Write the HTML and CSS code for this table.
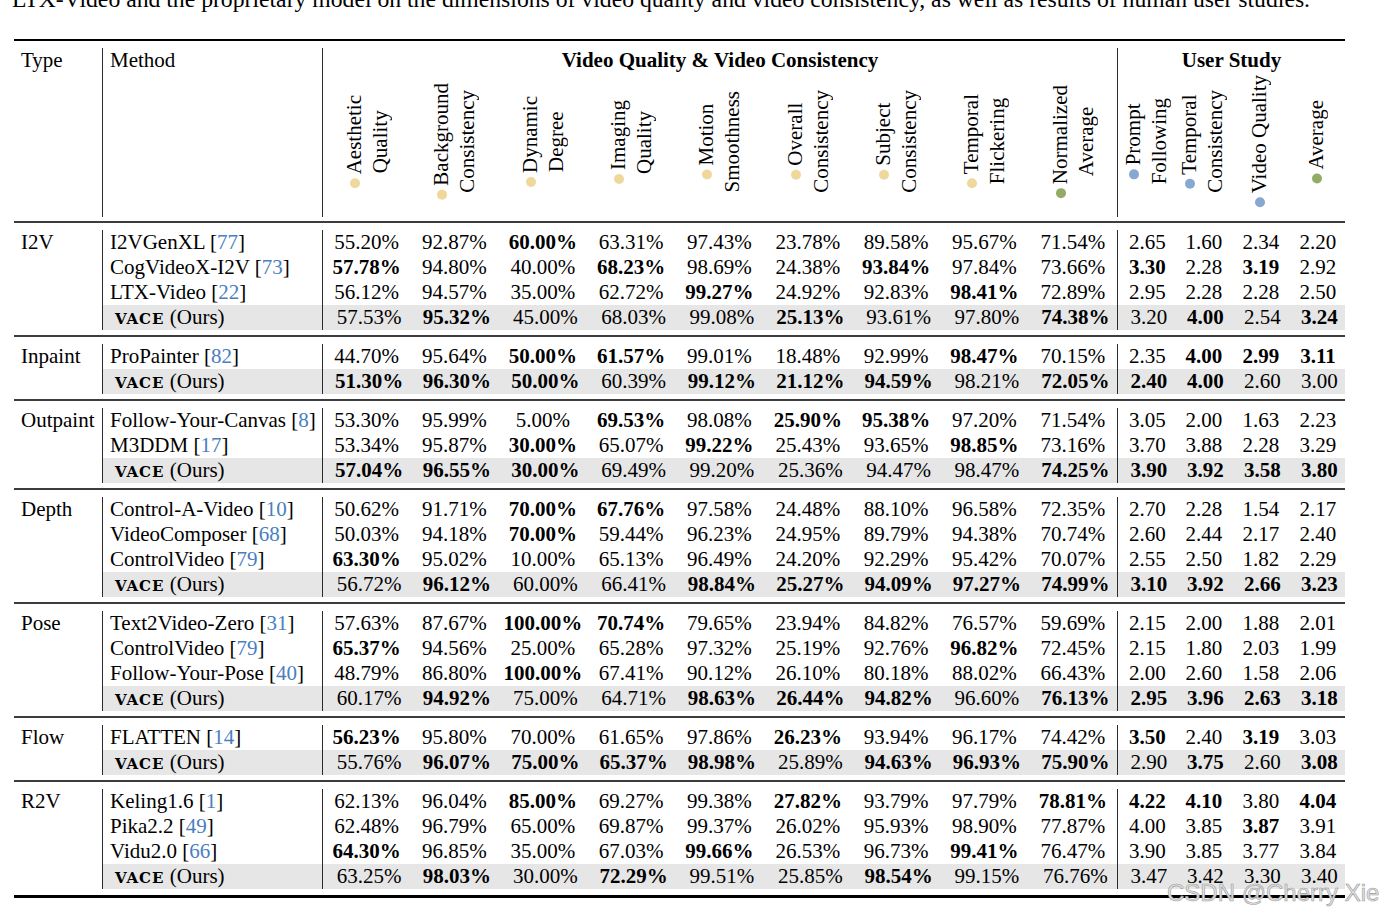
FILE: index.html
```html
<!DOCTYPE html>
<html lang="en">
<head>
<meta charset="utf-8">
<title>VACE comparison table</title>
<link rel="stylesheet" href="styles.css">
</head>
<body>
<div class="caption">LTX-Video and the proprietary model on the dimensions of video quality and video consistency, as well as results of human user studies.</div>
<table class="results">
<colgroup>
<col class="c-type"><col class="c-method">
<col class="c-pct"><col class="c-pct"><col class="c-pct"><col class="c-pct"><col class="c-pct"><col class="c-pct"><col class="c-pct"><col class="c-pct"><col class="c-pct">
<col class="c-us"><col class="c-us"><col class="c-us"><col class="c-us">
</colgroup>
<thead>
<tr class="sep sep-top"><td colspan="15"><div class="rule"></div></td></tr>
<tr class="hd-title">
<th class="h-type" rowspan="2">Type</th>
<th class="h-method vl" rowspan="2">Method</th>
<th class="h-grp vl" colspan="9">Video Quality &amp; Video Consistency</th>
<th class="h-grp vl" colspan="4">User Study</th>
</tr>
<tr class="hd-labels">
<th class="vl"><div class="lbl"><span class="rot"><i class="dot y"></i>Aesthetic<br>Quality</span></div></th>
<th><div class="lbl"><span class="rot"><i class="dot y"></i>Background<br>Consistency</span></div></th>
<th><div class="lbl"><span class="rot"><i class="dot y"></i>Dynamic<br>Degree</span></div></th>
<th><div class="lbl"><span class="rot"><i class="dot y"></i>Imaging<br>Quality</span></div></th>
<th><div class="lbl"><span class="rot"><i class="dot y"></i>Motion<br>Smoothness</span></div></th>
<th><div class="lbl"><span class="rot"><i class="dot y"></i>Overall<br>Consistency</span></div></th>
<th><div class="lbl"><span class="rot"><i class="dot y"></i>Subject<br>Consistency</span></div></th>
<th><div class="lbl"><span class="rot"><i class="dot y"></i>Temporal<br>Flickering</span></div></th>
<th><div class="lbl"><span class="rot"><i class="dot g"></i>Normalized<br>Average</span></div></th>
<th class="vl"><div class="lbl"><span class="rot"><i class="dot b"></i>Prompt<br>Following</span></div></th>
<th><div class="lbl"><span class="rot"><i class="dot b"></i>Temporal<br>Consistency</span></div></th>
<th><div class="lbl"><span class="rot"><i class="dot b"></i>Video Quality</span></div></th>
<th><div class="lbl"><span class="rot"><i class="dot g"></i>Average</span></div></th>
</tr>
<tr class="sep sep-head"><td colspan="15"><div class="rule"></div></td></tr>
</thead>
<tbody>
<!-- I2V -->
<tr class="row"><td class="type" rowspan="4">I2V</td><td class="m vl">I2VGenXL [<span class="ref">77</span>]</td>
<td class="n vl">55.20%</td><td class="n">92.87%</td><td class="n"><b>60.00%</b></td><td class="n">63.31%</td><td class="n">97.43%</td><td class="n">23.78%</td><td class="n">89.58%</td><td class="n">95.67%</td><td class="n">71.54%</td>
<td class="u vl">2.65</td><td class="u">1.60</td><td class="u">2.34</td><td class="u">2.20</td></tr>
<tr class="row"><td class="m vl">CogVideoX-I2V [<span class="ref">73</span>]</td>
<td class="n vl"><b>57.78%</b></td><td class="n">94.80%</td><td class="n">40.00%</td><td class="n"><b>68.23%</b></td><td class="n">98.69%</td><td class="n">24.38%</td><td class="n"><b>93.84%</b></td><td class="n">97.84%</td><td class="n">73.66%</td>
<td class="u vl"><b>3.30</b></td><td class="u">2.28</td><td class="u"><b>3.19</b></td><td class="u">2.92</td></tr>
<tr class="row"><td class="m vl">LTX-Video [<span class="ref">22</span>]</td>
<td class="n vl">56.12%</td><td class="n">94.57%</td><td class="n">35.00%</td><td class="n">62.72%</td><td class="n"><b>99.27%</b></td><td class="n">24.92%</td><td class="n">92.83%</td><td class="n"><b>98.41%</b></td><td class="n">72.89%</td>
<td class="u vl">2.95</td><td class="u">2.28</td><td class="u">2.28</td><td class="u">2.50</td></tr>
<tr class="row ours"><td class="m vl"><span class="vace">VACE</span> (Ours)</td>
<td class="n vl">57.53%</td><td class="n"><b>95.32%</b></td><td class="n">45.00%</td><td class="n">68.03%</td><td class="n">99.08%</td><td class="n"><b>25.13%</b></td><td class="n">93.61%</td><td class="n">97.80%</td><td class="n"><b>74.38%</b></td>
<td class="u vl">3.20</td><td class="u"><b>4.00</b></td><td class="u">2.54</td><td class="u"><b>3.24</b></td></tr>
<tr class="sep"><td colspan="15"><div class="rule"></div></td></tr>
<!-- Inpaint -->
<tr class="row"><td class="type" rowspan="2">Inpaint</td><td class="m vl">ProPainter [<span class="ref">82</span>]</td>
<td class="n vl">44.70%</td><td class="n">95.64%</td><td class="n"><b>50.00%</b></td><td class="n"><b>61.57%</b></td><td class="n">99.01%</td><td class="n">18.48%</td><td class="n">92.99%</td><td class="n"><b>98.47%</b></td><td class="n">70.15%</td>
<td class="u vl">2.35</td><td class="u"><b>4.00</b></td><td class="u"><b>2.99</b></td><td class="u"><b>3.11</b></td></tr>
<tr class="row ours"><td class="m vl"><span class="vace">VACE</span> (Ours)</td>
<td class="n vl"><b>51.30%</b></td><td class="n"><b>96.30%</b></td><td class="n"><b>50.00%</b></td><td class="n">60.39%</td><td class="n"><b>99.12%</b></td><td class="n"><b>21.12%</b></td><td class="n"><b>94.59%</b></td><td class="n">98.21%</td><td class="n"><b>72.05%</b></td>
<td class="u vl"><b>2.40</b></td><td class="u"><b>4.00</b></td><td class="u">2.60</td><td class="u">3.00</td></tr>
<tr class="sep"><td colspan="15"><div class="rule"></div></td></tr>
<!-- Outpaint -->
<tr class="row"><td class="type" rowspan="3">Outpaint</td><td class="m vl">Follow-Your-Canvas [<span class="ref">8</span>]</td>
<td class="n vl">53.30%</td><td class="n">95.99%</td><td class="n">5.00%</td><td class="n"><b>69.53%</b></td><td class="n">98.08%</td><td class="n"><b>25.90%</b></td><td class="n"><b>95.38%</b></td><td class="n">97.20%</td><td class="n">71.54%</td>
<td class="u vl">3.05</td><td class="u">2.00</td><td class="u">1.63</td><td class="u">2.23</td></tr>
<tr class="row"><td class="m vl">M3DDM [<span class="ref">17</span>]</td>
<td class="n vl">53.34%</td><td class="n">95.87%</td><td class="n"><b>30.00%</b></td><td class="n">65.07%</td><td class="n"><b>99.22%</b></td><td class="n">25.43%</td><td class="n">93.65%</td><td class="n"><b>98.85%</b></td><td class="n">73.16%</td>
<td class="u vl">3.70</td><td class="u">3.88</td><td class="u">2.28</td><td class="u">3.29</td></tr>
<tr class="row ours"><td class="m vl"><span class="vace">VACE</span> (Ours)</td>
<td class="n vl"><b>57.04%</b></td><td class="n"><b>96.55%</b></td><td class="n"><b>30.00%</b></td><td class="n">69.49%</td><td class="n">99.20%</td><td class="n">25.36%</td><td class="n">94.47%</td><td class="n">98.47%</td><td class="n"><b>74.25%</b></td>
<td class="u vl"><b>3.90</b></td><td class="u"><b>3.92</b></td><td class="u"><b>3.58</b></td><td class="u"><b>3.80</b></td></tr>
<tr class="sep"><td colspan="15"><div class="rule"></div></td></tr>
<!-- Depth -->
<tr class="row"><td class="type" rowspan="4">Depth</td><td class="m vl">Control-A-Video [<span class="ref">10</span>]</td>
<td class="n vl">50.62%</td><td class="n">91.71%</td><td class="n"><b>70.00%</b></td><td class="n"><b>67.76%</b></td><td class="n">97.58%</td><td class="n">24.48%</td><td class="n">88.10%</td><td class="n">96.58%</td><td class="n">72.35%</td>
<td class="u vl">2.70</td><td class="u">2.28</td><td class="u">1.54</td><td class="u">2.17</td></tr>
<tr class="row"><td class="m vl">VideoComposer [<span class="ref">68</span>]</td>
<td class="n vl">50.03%</td><td class="n">94.18%</td><td class="n"><b>70.00%</b></td><td class="n">59.44%</td><td class="n">96.23%</td><td class="n">24.95%</td><td class="n">89.79%</td><td class="n">94.38%</td><td class="n">70.74%</td>
<td class="u vl">2.60</td><td class="u">2.44</td><td class="u">2.17</td><td class="u">2.40</td></tr>
<tr class="row"><td class="m vl">ControlVideo [<span class="ref">79</span>]</td>
<td class="n vl"><b>63.30%</b></td><td class="n">95.02%</td><td class="n">10.00%</td><td class="n">65.13%</td><td class="n">96.49%</td><td class="n">24.20%</td><td class="n">92.29%</td><td class="n">95.42%</td><td class="n">70.07%</td>
<td class="u vl">2.55</td><td class="u">2.50</td><td class="u">1.82</td><td class="u">2.29</td></tr>
<tr class="row ours"><td class="m vl"><span class="vace">VACE</span> (Ours)</td>
<td class="n vl">56.72%</td><td class="n"><b>96.12%</b></td><td class="n">60.00%</td><td class="n">66.41%</td><td class="n"><b>98.84%</b></td><td class="n"><b>25.27%</b></td><td class="n"><b>94.09%</b></td><td class="n"><b>97.27%</b></td><td class="n"><b>74.99%</b></td>
<td class="u vl"><b>3.10</b></td><td class="u"><b>3.92</b></td><td class="u"><b>2.66</b></td><td class="u"><b>3.23</b></td></tr>
<tr class="sep"><td colspan="15"><div class="rule"></div></td></tr>
<!-- Pose -->
<tr class="row"><td class="type" rowspan="4">Pose</td><td class="m vl">Text2Video-Zero [<span class="ref">31</span>]</td>
<td class="n vl">57.63%</td><td class="n">87.67%</td><td class="n"><b>100.00%</b></td><td class="n"><b>70.74%</b></td><td class="n">79.65%</td><td class="n">23.94%</td><td class="n">84.82%</td><td class="n">76.57%</td><td class="n">59.69%</td>
<td class="u vl">2.15</td><td class="u">2.00</td><td class="u">1.88</td><td class="u">2.01</td></tr>
<tr class="row"><td class="m vl">ControlVideo [<span class="ref">79</span>]</td>
<td class="n vl"><b>65.37%</b></td><td class="n">94.56%</td><td class="n">25.00%</td><td class="n">65.28%</td><td class="n">97.32%</td><td class="n">25.19%</td><td class="n">92.76%</td><td class="n"><b>96.82%</b></td><td class="n">72.45%</td>
<td class="u vl">2.15</td><td class="u">1.80</td><td class="u">2.03</td><td class="u">1.99</td></tr>
<tr class="row"><td class="m vl">Follow-Your-Pose [<span class="ref">40</span>]</td>
<td class="n vl">48.79%</td><td class="n">86.80%</td><td class="n"><b>100.00%</b></td><td class="n">67.41%</td><td class="n">90.12%</td><td class="n">26.10%</td><td class="n">80.18%</td><td class="n">88.02%</td><td class="n">66.43%</td>
<td class="u vl">2.00</td><td class="u">2.60</td><td class="u">1.58</td><td class="u">2.06</td></tr>
<tr class="row ours"><td class="m vl"><span class="vace">VACE</span> (Ours)</td>
<td class="n vl">60.17%</td><td class="n"><b>94.92%</b></td><td class="n">75.00%</td><td class="n">64.71%</td><td class="n"><b>98.63%</b></td><td class="n"><b>26.44%</b></td><td class="n"><b>94.82%</b></td><td class="n">96.60%</td><td class="n"><b>76.13%</b></td>
<td class="u vl"><b>2.95</b></td><td class="u"><b>3.96</b></td><td class="u"><b>2.63</b></td><td class="u"><b>3.18</b></td></tr>
<tr class="sep"><td colspan="15"><div class="rule"></div></td></tr>
<!-- Flow -->
<tr class="row"><td class="type" rowspan="2">Flow</td><td class="m vl">FLATTEN [<span class="ref">14</span>]</td>
<td class="n vl"><b>56.23%</b></td><td class="n">95.80%</td><td class="n">70.00%</td><td class="n">61.65%</td><td class="n">97.86%</td><td class="n"><b>26.23%</b></td><td class="n">93.94%</td><td class="n">96.17%</td><td class="n">74.42%</td>
<td class="u vl"><b>3.50</b></td><td class="u">2.40</td><td class="u"><b>3.19</b></td><td class="u">3.03</td></tr>
<tr class="row ours"><td class="m vl"><span class="vace">VACE</span> (Ours)</td>
<td class="n vl">55.76%</td><td class="n"><b>96.07%</b></td><td class="n"><b>75.00%</b></td><td class="n"><b>65.37%</b></td><td class="n"><b>98.98%</b></td><td class="n">25.89%</td><td class="n"><b>94.63%</b></td><td class="n"><b>96.93%</b></td><td class="n"><b>75.90%</b></td>
<td class="u vl">2.90</td><td class="u"><b>3.75</b></td><td class="u">2.60</td><td class="u"><b>3.08</b></td></tr>
<tr class="sep"><td colspan="15"><div class="rule"></div></td></tr>
<!-- R2V -->
<tr class="row"><td class="type" rowspan="4">R2V</td><td class="m vl">Keling1.6 [<span class="ref">1</span>]</td>
<td class="n vl">62.13%</td><td class="n">96.04%</td><td class="n"><b>85.00%</b></td><td class="n">69.27%</td><td class="n">99.38%</td><td class="n"><b>27.82%</b></td><td class="n">93.79%</td><td class="n">97.79%</td><td class="n"><b>78.81%</b></td>
<td class="u vl"><b>4.22</b></td><td class="u"><b>4.10</b></td><td class="u">3.80</td><td class="u"><b>4.04</b></td></tr>
<tr class="row"><td class="m vl">Pika2.2 [<span class="ref">49</span>]</td>
<td class="n vl">62.48%</td><td class="n">96.79%</td><td class="n">65.00%</td><td class="n">69.87%</td><td class="n">99.37%</td><td class="n">26.02%</td><td class="n">95.93%</td><td class="n">98.90%</td><td class="n">77.87%</td>
<td class="u vl">4.00</td><td class="u">3.85</td><td class="u"><b>3.87</b></td><td class="u">3.91</td></tr>
<tr class="row"><td class="m vl">Vidu2.0 [<span class="ref">66</span>]</td>
<td class="n vl"><b>64.30%</b></td><td class="n">96.85%</td><td class="n">35.00%</td><td class="n">67.03%</td><td class="n"><b>99.66%</b></td><td class="n">26.53%</td><td class="n">96.73%</td><td class="n"><b>99.41%</b></td><td class="n">76.47%</td>
<td class="u vl">3.90</td><td class="u">3.85</td><td class="u">3.77</td><td class="u">3.84</td></tr>
<tr class="row ours"><td class="m vl"><span class="vace">VACE</span> (Ours)</td>
<td class="n vl">63.25%</td><td class="n"><b>98.03%</b></td><td class="n">30.00%</td><td class="n"><b>72.29%</b></td><td class="n">99.51%</td><td class="n">25.85%</td><td class="n"><b>98.54%</b></td><td class="n">99.15%</td><td class="n">76.76%</td>
<td class="u vl">3.47</td><td class="u">3.42</td><td class="u">3.30</td><td class="u">3.40</td></tr>
<tr class="sep sep-bot"><td colspan="15"><div class="rule"></div></td></tr>
</tbody>
</table>
<div class="wm">CSDN @Cherry Xie</div>
</body>
</html>
```

FILE: styles.css
```css
* { box-sizing: border-box; }
html, body { margin: 0; padding: 0; background: #fff; }
body {
  position: relative;
  width: 1390px;
  height: 918px;
  overflow: hidden;
  font-family: "Liberation Serif", "Times New Roman", serif;
  font-size: 21px;
  color: #000;
}
.caption {
  margin: -14px 0 0 12px;
  height: 26px;
  font-size: 23.7px;
  line-height: 26px;
  white-space: nowrap;
}
.results {
  margin: 27px 0 0 14px;
  width: 1331px;
  table-layout: fixed;
  border-collapse: separate;
  border-spacing: 0;
}
.results th, .results td {
  padding: 0;
  font-weight: normal;
  white-space: nowrap;
}
col.c-type { width: 88px; }
col.c-method { width: 220px; }
col.c-pct { width: 88.33px; }
col.c-us { width: 57px; }

/* horizontal rules (booktabs style, with gaps around) */
.results .sep td { padding: 5px 0 7px; line-height: 0; font-size: 0; }
.sep .rule { height: 2px; background: #3c3c3c; }
.results .sep-head td { padding: 4px 0 7px; }
.results .sep-top td { padding: 0 0 7px; }
.sep-top .rule { background: #000; }
.results .sep-bot td { padding: 6px 0 0; }
.sep-bot .rule { height: 3px; background: #000; }

.vl { border-left: 1px solid #2a2a2a; }

/* header */
.hd-title th { height: 25px; line-height: 25px; vertical-align: top; }
.results .h-type, .results .h-method { text-align: left; padding-left: 7px; }
.results .h-grp { font-weight: bold; text-align: center; }
.hd-labels th { height: 144px; vertical-align: top; }
.lbl {
  height: 144px;
  padding-bottom: 7px;
  display: flex;
  align-items: center;
  justify-content: center;
}
.rot {
  writing-mode: vertical-rl;
  transform: rotate(180deg);
  line-height: 26px;
  text-align: center;
  white-space: nowrap;
}
.dot {
  display: inline-block;
  width: 10px;
  height: 10px;
  border-radius: 50%;
  margin-inline-end: 4px;
  vertical-align: middle;
  transform: translateX(-6px);
}
.dot.y { background: #eed89b; }
.dot.b { background: #88a8d2; }
.dot.g { background: #93ab67; }

/* body rows */
.row td { height: 25px; line-height: 25px; }
.results .type { text-align: left; vertical-align: top; padding-left: 7px; }
.results .m { text-align: left; padding-left: 7px; }
.n, .u { text-align: center; }
.results .u { padding-left: 3px; }
.ours td { background: #e6e6e6; }
.results .ours .m { padding-left: 12px; }
.results .ours .n { padding-left: 5px; }
.results .ours .u { padding-left: 6px; }
.ref { color: #4a7ec0; }
.vace {
  font-family: "DejaVu Serif", "Liberation Serif", serif;
  font-weight: bold;
  font-size: 15px;
  line-height: 1;
  letter-spacing: 1px;
}

/* watermark overlay */
.wm {
  position: absolute;
  left: 1167px;
  top: 881px;
  font-family: "Liberation Sans", Arial, sans-serif;
  font-size: 24px;
  line-height: 24px;
  color: #e2e2e2;
  -webkit-text-stroke: 0.6px #9c9c9c;
  white-space: nowrap;
}
```
